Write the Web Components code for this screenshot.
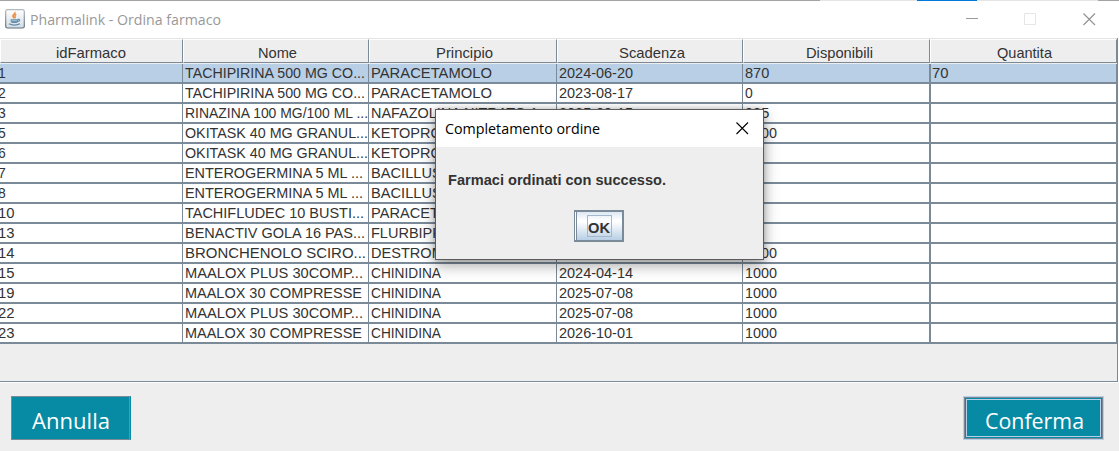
<!DOCTYPE html>
<html lang="it">
<head>
<meta charset="utf-8">
<title>Pharmalink - Ordina farmaco</title>
<style>
body{margin:0;background:#eee;overflow:hidden;font-family:"Liberation Sans",Arial,sans-serif}
</style>
</head>
<body>
<pharma-window></pharma-window>
<script>
const define = (name, html, setup) => customElements.define(name, class extends HTMLElement {
  constructor() {
    super();
    const t = document.createElement('template');
    t.innerHTML = html;
    this.attachShadow({mode: 'open'}).append(t.content.cloneNode(true));
  }
  connectedCallback() { if (setup) setup(this, this.shadowRoot); }
});

/* condenses a line of text to a given pixel width */
define('fit-text', `<style>:host{display:inline-block;white-space:pre}span{display:inline-block;transform-origin:0 50%}</style><span><slot></slot></span>`, (host, root) => {
  const span = root.querySelector('span');
  const got = span.offsetWidth;
  const want = +host.getAttribute('w') || got * .97;
  if (got) {
    host.style.width = want + 'px';
    span.style.transform = `scaleX(${want / span.getBoundingClientRect().width})`;
  }
});

define('title-bar', `
<style>
:host{display:flex;height:38px;box-sizing:border-box;background:#fff;align-items:center;padding:0 24px 0 5px;color:#999;font:15px "Open Sans","Segoe UI",sans-serif;
 border-top:1px solid #a3a3a3;border-image:linear-gradient(90deg,#a3a3a3 0 820px,#e5e5e5 820px 916px,#0078d7 916px 976px,#e5e5e5 976px 1097px,#a3a3a3 1097px) 1}
.t{flex:1;margin:0 0 1px 5px}
svg{display:block}
.i{margin-bottom:1px}
.c{display:flex;gap:45px;align-items:center}
.x{margin:0 -1px 0 1px}
</style>
<svg class="i" width="20" height="20" viewBox="0 0 20 20">
 <defs><linearGradient id="g" x1="0" y1="0" x2="0" y2="1"><stop offset="0" stop-color="#fff"/><stop offset="1" stop-color="#d4dce3"/></linearGradient>
 <linearGradient id="b" x1="0" y1="0" x2="0" y2="1"><stop offset="0" stop-color="#b3bac0"/><stop offset="1" stop-color="#5d7080"/></linearGradient></defs>
 <rect x=".7" y=".7" width="18.6" height="18.3" rx="1.8" fill="url(#g)" stroke="url(#b)" stroke-width="1.2"/>
 <path d="M9.8 3c1.4 1.7-3.4 3-1.5 5.1l1 1.3M11.3 5.3c-2.6 1.2-.7 2-1.3 4" fill="none" stroke="#ed8b3b" stroke-width="1.5"/>
 <path d="M5.6 10.2h7.4v1.6c0 1.6-.9 2.2-1.6 2.2H7.5C6.3 14 5.6 13 5.6 11.8z" fill="#638eae"/>
 <path d="M13 10.5c2.6-.4 2 2-.8 2.1M4 14.8c2.5 1.7 8.2 1.6 11 0" fill="none" stroke="#638eae" stroke-width="1.3"/>
 <path d="M6.5 11.7h5.4" stroke="#c9d9e4" stroke-width=".7"/>
</svg>
<div class="t"><fit-text w="191">Pharmalink - Ordina farmaco</fit-text></div>
<div class="c">
 <svg width="13" height="13"><path d="M0 5.5h12" stroke="#999"/></svg>
 <svg width="13" height="13"><path d="M.5.5h11v11H.5z" fill="none" stroke="#e6e6e6"/></svg>
 <svg class="x" width="13" height="13"><path d="M.5.5l11.5 11.5M12 .5l-11.5 11.5" stroke="#909090" stroke-width="1.1"/></svg>
</div>`);

define('table-head', `
<style>
:host{display:grid;grid-template-columns:183px 186px 188px 186px 187px 187px;width:1117px;height:26px;border-top:1px solid #e4e4e4;box-sizing:border-box;background:#eee}
div{box-sizing:border-box;height:24px;border-top:1px solid #fff;border-left:1px solid #fff;border-right:1px solid #7a8a99;border-bottom:1px solid #7a8a99;text-align:center;font-size:15px;line-height:25px;color:#333;padding-left:3px}
div:first-of-type{padding:0 1px 0 0}
div:nth-of-type(5){padding-left:5px}
div:nth-of-type(6){padding-left:2px}
</style>
<div><fit-text w="70">idFarmaco</fit-text></div><div><fit-text w="39">Nome</fit-text></div><div><fit-text w="57">Principio</fit-text></div><div><fit-text w="66">Scadenza</fit-text></div><div><fit-text w="67">Disponibili</fit-text></div><div><fit-text w="55">Quantita</fit-text></div>`);

define('table-row', `
<style>
:host{display:grid;grid-template-columns:183px 186px 188px 186px 188px 186px;width:1117px;height:20px;background:#fff;color:#333;font-size:15px}
:host([selected]){background:#b8cfe5}
div{box-sizing:border-box;height:20px;border-right:1px solid #7a8a99;border-bottom:2px solid #7a8a99;line-height:17px;white-space:nowrap;overflow:hidden;padding-left:2px}
div:first-of-type{padding:0}
div:first-of-type fit-text{margin-left:-2px}
div:nth-of-type(5){border-right-width:2px}
div:nth-of-type(6){padding-left:1px}
</style>`, (host, root) => {
  const widths = [0, +host.getAttribute('nw'), +host.getAttribute('pw'), 74, 0, 0];
  host.getAttribute('cells').split('|').forEach((v, i) => {
    const d = document.createElement('div');
    root.append(d);
    if (v) {
      const f = document.createElement('fit-text');
      if (widths[i]) f.setAttribute('w', widths[i]);
      f.textContent = v;
      d.append(f);
    }
  });
});

define('table-panel', `
<style>:host{display:block;box-sizing:border-box;width:1118px;height:344px;border-bottom:1px solid #7a8a99;box-shadow:0 1px #fff,1px 0 #fff;background:linear-gradient(#7a8a99,#7a8a99) right/1px 100% no-repeat #eee}</style>
<table-head></table-head><slot></slot>`);

define('action-button', `
<style>
:host{display:flex;box-sizing:border-box;width:120px;height:44px;background:#078aa3;color:#fff;border:1px solid #7a8a99;border-right:1px solid #078aa3;box-shadow:inset -1px 0 #7a8a99;align-items:center;justify-content:center;font:22px "Open Sans","Segoe UI",sans-serif;padding-top:3px}
:host([focused]){width:141px;border-color:#b8cfe5;box-shadow:inset 0 0 0 1px #7a8a99,inset 0 0 0 2px #078aa3,inset 0 0 0 3px #b8cfe5;padding-left:1px}
</style><slot></slot>`);

define('ok-button', `
<style>
:host{display:flex;box-sizing:border-box;width:50px;height:32px;border:2px solid #7a8a99;border-left-width:1px;background:linear-gradient(#dde8f3,#fff 30%,#fff 35%,#b8cfe5);box-shadow:inset 1px 0 #fff,inset 2px 0 #7a8a99;align-items:center;justify-content:center;padding-left:1px}
div{box-sizing:border-box;width:25px;height:22px;border:1px solid #a3b8cc;font-weight:bold;font-size:15px;line-height:23px;text-align:center;color:#333}
</style><div><slot></slot></div>`);

define('order-dialog', `
<style>
:host{position:absolute;left:435px;top:109px;width:329px;height:151px;box-sizing:border-box;border:1px solid #5c5c5c;background:#eee;box-shadow:0 5px 14px rgba(0,0,0,.36),0 0 5px rgba(0,0,0,.2)}
header{display:flex;height:37px;background:#fff;align-items:center;justify-content:space-between;padding:0 14px 0 9px;font:15px "Open Sans","Segoe UI",sans-serif;color:#000}
header fit-text{margin-bottom:1px}
p{margin:24px 0 0 12px;font-weight:bold;font-size:15px;line-height:18px;color:#333}
ok-button{margin:21px 0 0 138px}
</style>
<header><fit-text w="155">Completamento ordine</fit-text><svg width="13" height="13"><path d="M.5.5l11.5 11.5M12 .5l-11.5 11.5" stroke="#000" stroke-width="1.1"/></svg></header>
<p><fit-text w="218">Farmaci ordinati con successo.</fit-text></p>
<ok-button><fit-text w="22">OK</fit-text></ok-button>`);

define('pharma-window', `
<style>
:host{display:block;width:1119px;height:451px;background:#eee}
footer{display:flex;justify-content:space-between;padding:14px 15px 0 11px}
</style>
<title-bar></title-bar>
<table-panel>
<table-row selected nw="180" pw="121" cells="1|TACHIPIRINA 500 MG CO...|PARACETAMOLO|2024-06-20|870|70"></table-row>
<table-row nw="180" pw="121" cells="2|TACHIPIRINA 500 MG CO...|PARACETAMOLO|2023-08-17|0|"></table-row>
<table-row nw="183" pw="167" cells="3|RINAZINA 100 MG/100 ML ...|NAFAZOLINA NITRATO 1|2025-09-15|985|"></table-row>
<table-row nw="183" cells="5|OKITASK 40 MG GRANUL...|KETOPRO||1000|"></table-row>
<table-row nw="183" cells="6|OKITASK 40 MG GRANUL...|KETOPRO|||"></table-row>
<table-row nw="178" cells="7|ENTEROGERMINA 5 ML ...|BACILLUS|||"></table-row>
<table-row nw="178" cells="8|ENTEROGERMINA 5 ML ...|BACILLUS|||"></table-row>
<table-row nw="179" cells="10|TACHIFLUDEC 10 BUSTI...|PARACET|||"></table-row>
<table-row nw="180" cells="13|BENACTIV GOLA 16 PAS...|FLURBIPR|||"></table-row>
<table-row nw="181" cells="14|BRONCHENOLO SCIRO...|DESTROM||1000|"></table-row>
<table-row nw="178" pw="70" cells="15|MAALOX PLUS 30COMP...|CHINIDINA|2024-04-14|1000|"></table-row>
<table-row nw="177" pw="70" cells="19|MAALOX 30 COMPRESSE|CHINIDINA|2025-07-08|1000|"></table-row>
<table-row nw="178" pw="70" cells="22|MAALOX PLUS 30COMP...|CHINIDINA|2025-07-08|1000|"></table-row>
<table-row nw="177" pw="70" cells="23|MAALOX 30 COMPRESSE|CHINIDINA|2026-10-01|1000|"></table-row>
</table-panel>
<footer><action-button><fit-text w="78">Annulla</fit-text></action-button><action-button focused><fit-text w="99">Conferma</fit-text></action-button></footer>
<order-dialog></order-dialog>`);
</script>
</body>
</html>
